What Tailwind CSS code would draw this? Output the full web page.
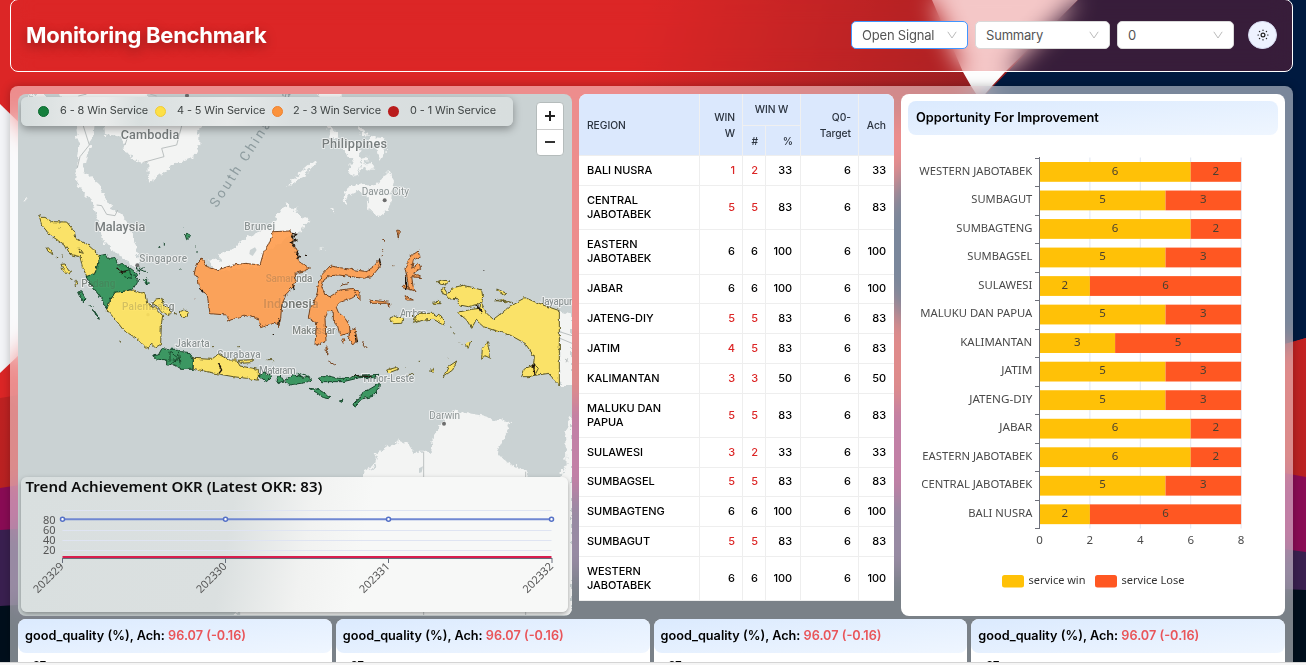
<!DOCTYPE html>
<html lang="en">
<head>
<meta charset="utf-8">
<title>Monitoring Benchmark</title>
<script src="https://cdn.jsdelivr.net/npm/@tailwindcss/browser@4"></script>
</head>
<body class="relative flex h-[665px] w-[1306px] flex-col overflow-hidden bg-[#f0f0f0] font-['Inter',sans-serif] text-black">
<svg class="absolute inset-0" width="1306" height="662" viewBox="0 0 1306 662">
  <defs>
    <linearGradient id="red" gradientUnits="userSpaceOnUse" x1="650" y1="0" x2="980" y2="90"><stop offset="0" stop-color="#dc2626"/><stop offset="1" stop-color="#9a1f22"/></linearGradient>
    <linearGradient id="red2" x1="0" y1="0" x2="0" y2="1"><stop offset="0" stop-color="#c42222"/><stop offset="1" stop-color="#b92222"/></linearGradient>
  </defs>
  <rect width="1306" height="665" fill="#dc2626"/>
  <polygon points="0,0 1306,0 1306,120 0,120" fill="url(#red)"/>
  <polygon points="932,0 1078,0 1005,72 992,86 980,100 971,86 963,72" fill="#fdfdfd"/>
  <polygon points="1078,0 1306,0 1306,338 1290,343 1190,370 897,318 850,250 897,183 980,100" fill="#001a40"/>
  <polygon points="0,104 140,240 0,373" fill="#f4f5f8"/>
  <polygon points="0,398 300,350 897,318 1190,370 1306,338 1306,500 0,500" fill="url(#red2)"/>
  <polygon points="0,488 573,402 897,402 1306,477 1306,560 0,560" fill="#8a0c55"/>
  <polygon points="0,530 573,495 897,497 1306,552 1306,620 0,620" fill="#3a2050"/>
  <polygon points="0,606 573,573 897,573 1306,590 1306,665 0,665" fill="#000f1c"/>
</svg>

<header class="relative mx-[10px] -mt-px flex h-[73px] w-[1283px] shrink-0 items-center justify-between rounded-lg border border-white bg-[#dc2626]/25 px-[15px] pb-px backdrop-blur-md">
  <h1 class="text-[22px] leading-none font-bold tracking-[-0.26px] whitespace-nowrap text-white [text-shadow:0_4px_12px_rgba(0,0,0,.35)]">Monitoring Benchmark</h1>
  <div class="flex items-center text-[13px] tracking-[-0.2px] text-[#555]">
    <div class="flex h-7 w-[117px] items-center justify-between rounded-[5px] border border-[#4096ff] bg-white px-[10px]"><span class="pt-px">Open Signal</span><svg width="10" height="8" viewBox="0 0 10 8" fill="none" stroke="#bbb"><path d="M.8.8 5 7 9.200.8"/></svg></div>
    <div class="ml-[7px] flex h-7 w-[135px] items-center justify-between rounded-[5px] border border-[#d9d9d9] bg-white px-[10px]"><span class="pt-px">Summary</span><svg width="10" height="8" viewBox="0 0 10 8" fill="none" stroke="#bbb"><path d="M.8.8 5 7 9.200.8"/></svg></div>
    <div class="ml-[7px] flex h-7 w-[117px] items-center justify-between rounded-[5px] border border-[#d9d9d9] bg-white px-[10px]"><span class="pt-px">0</span><svg width="10" height="8" viewBox="0 0 10 8" fill="none" stroke="#bbb"><path d="M.8.8 5 7 9.200.8"/></svg></div>
    <div class="ml-[14px] flex h-7 w-[29px] items-center justify-center rounded-full border border-[#d5d9ef] bg-[#eef2ff]"><svg width="12" height="12" viewBox="0 0 12 12" fill="none" stroke="#222" stroke-width="1.200" stroke-linecap="round"><circle cx="6" cy="6" r="1.900"/><path d="M6 1v.4M6 10.600v.4M1 6h.4M10.600 6h.4M2.400 2.400l.3.3M9.300 9.300l.3.3M2.400 9.600l.3-.3M9.300 2.700l.3-.3"/></svg></div>
  </div>
</header>

<main class="relative mx-[10px] mt-[14px] flex h-[576px] w-[1283px] shrink-0 flex-col gap-1 overflow-hidden rounded-t-lg bg-white/48 px-2 pt-2 shadow-[0_0_10px_rgba(0,0,0,.25)] backdrop-blur-md">
  <div class="flex h-[521px] shrink-0">
    <section class="relative h-[522px] w-[554px] overflow-hidden rounded-lg bg-[#cad2d3]">
      <svg class="block" width="554" height="521" viewBox="54 27 1662 1563">
        <defs>
          <filter id="rough" x="-5%" y="-5%" width="110%" height="110%"><feTurbulence type="fractalNoise" baseFrequency=".08" numOctaves="2" seed="4"/><feDisplacementMap in="SourceGraphic" scale="11" xChannelSelector="R" yChannelSelector="G"/></filter>
          <filter id="coast" x="-5%" y="-5%" width="110%" height="110%"><feTurbulence type="fractalNoise" baseFrequency=".06" numOctaves="3" seed="9"/><feDisplacementMap in="SourceGraphic" scale="26" xChannelSelector="R" yChannelSelector="G"/></filter>
        </defs>
        <g fill="#f3f4f3" filter="url(#coast)">
          <path d="M85 27H135V36H85ZM160 20H430L470 60H598V180L580 215 510 245 480 270 447 293 445 235 420 232 400 222 375 195 365 158 315 150 312 110 285 110 280 150 265 200 250 262 272 275 300 300 320 355 350 378 375 400 395 440 410 490 416 520 420 545 400 540 345 505 305 460 298 410 275 350 245 315 225 290 233 230 238 180 228 123 190 40Z"/>
          <path d="M622 520 660 527 665 503 700 490 730 465 770 445 820 410 842 375 865 355 880 375 895 365 890 385 935 405 912 420 910 435 875 450 800 500 780 545 650 560Z"/>
          <path d="M958 27H1025V60H958ZM980 115 1010 140 1015 155 1000 160 985 140ZM1030 185 1065 165 1085 200 1065 222 1045 222ZM1070 215 1084 222 1068 275 1045 265 1052 235ZM1110 155 1150 160 1158 195 1138 228 1128 185 1095 175ZM1090 240 1112 230 1120 250 1098 258ZM1090 218 1102 215 1087 252 1076 264ZM870 290 945 222 952 230 920 264 885 290 865 304ZM1028 350 1042 310 1085 295 1105 305 1130 300 1150 270 1165 258 1182 290 1175 320 1174 355 1152 392 1128 388 1102 370 1100 330 1070 318 1045 330 1036 355ZM1070 118 1090 132 1102 152 1086 150ZM995 380l12-4v6zM960 492l10-4v7z"/>
          <path d="M1678 677 1716 690V900H1678Z"/>
          <path d="M700 1600 740 1560 1055 1180 1085 1185 1092 1158 1122 1145 1135 1105 1198 1066 1222 1078 1240 1100 1290 1100 1300 1060 1330 1005 1365 980 1405 985 1440 990 1490 1005 1530 1008 1520 1045 1490 1100 1510 1125 1570 1155 1612 1200 1665 1195 1700 1140 1695 1050 1716 985V1600Z"/>
          <path d="M70 340h6v9h-6z"/>
        </g>
        <g fill="#cad2d3"><path d="M1522 1065l10-4 4 12-12 2zM1257 1150l12-6-4 18-8 2zM750 495l15-8 5 8-12 18-10-6z"/></g>
        <g fill="none" stroke="#b0b6b6" stroke-width="2.500">
          <path d="M250 123 268 180 240 215 232 248M290 360 305 362 320 388 345 392 353 375M375 180 385 150M545 123 530 180 485 190 492 215 430 232M1271 1100V1600M1577 1160V1600M1678 740 1716 752M1680 760 1716 775M235 33 260 27M450 27 470 33M780 440l10-10"/>
          <path d="M1695 822l10 8M1703 820l-5 12"/>
        </g>
        <g font-family="Roboto,sans-serif" fill="#8b9393" stroke="#f3f4f4" stroke-width="5" stroke-linejoin="round" paint-order="stroke">
          <g font-size="38" font-weight="500"><text x="362" y="163" textLength="176" fill="#777d7d">Cambodia</text><text x="284" y="438" textLength="152" fill="#777d7d">Malaysia</text><text x="965" y="188" textLength="196" fill="#777d7d">Philippines</text><text x="790" y="669" textLength="166" fill="#777d7d">Indonesia</text></g>
          <g font-size="30" font-weight="500"><text x="733" y="434" textLength="92">Brunei</text><text x="418" y="531" textLength="143">Singapore</text><text x="1085" y="330" textLength="142" font-weight="400">Davao City</text><text x="244" y="605" textLength="102">Padang</text><text x="366" y="674" textLength="157">Palembang</text><text x="797" y="592" textLength="140">Samarinda</text><text x="877" y="747" textLength="130">Makassar</text><text x="526" y="787" textLength="103">Jakarta</text><text x="652" y="818" textLength="130">Surabaya</text><text x="777" y="866" textLength="110">Mataram</text><text x="1085" y="892" textLength="157">Timor-Leste</text><text x="1200" y="697" textLength="80">Ambon</text><text x="1617" y="659" textLength="115">Jayapura</text><text x="1288" y="1002" textLength="92" font-weight="400">Darwin</text></g>
          <text transform="translate(650 370) rotate(-57)" font-size="41" textLength="410" stroke="none" fill="#8e9c9f">South China Sea</text>
        </g>
        <g fill="#6d6d6d"><circle cx="1154" cy="346" r="6"/><circle cx="412" cy="541" r="6"/><circle cx="1332" cy="1016" r="6"/><circle cx="561" cy="32" r="6"/><circle cx="444" cy="689" r="5"/></g>
        <g filter="url(#rough)" stroke-width="3" stroke-linejoin="round" fill-opacity=".9">
          <g fill="#ffe35c" stroke="#5f5925">
            <path d="M118 397 135 397 155 410 200 411 222 438 228 460 262 478 298 510 290 560 262 578 247 545 240 515 210 508 195 480 150 450 125 420ZM232 490 240 490 250 505 240 502Z"/>
            <path d="M135 490 145 488 160 507 148 502ZM183 538 195 537 212 560 205 570 190 555ZM170 516l5 3M186 511l4 5M225 587 235 592 226 605ZM115 392l8-3M210 577l8 5M355 768l7 4M176 430l3 2"/>
            <path d="M345 620 400 615 435 627 440 655 470 672 488 692 484 718 482 778 465 788 456 778 440 790 412 762 370 735 345 702 320 674 328 652Z"/>
            <path d="M458 655 470 642 485 640 490 658 512 680 508 692 488 682 475 668ZM540 680 552 675 565 682 560 695 543 695ZM522 686h8"/>
            <path d="M580 820 635 823 655 807 678 820 685 825 710 825 720 843 775 853 775 886 740 880 700 875 655 867 620 860 580 850ZM715 826 762 824 752 833 722 835ZM800 824h14M820 830h4M636 785h4M712 785h5"/>
            <path d="M1168 700 1185 692 1210 700 1205 715 1180 716ZM1245 700 1258 685 1300 685 1330 700 1333 720 1300 703 1270 705 1240 715ZM1236 690l18 20M1160 855 1190 847 1197 852 1165 864ZM1215 846h5M1256 829h5M1225 868h15M1289 857 1300 850 1300 862Z"/>
            <path d="M1340 630 1355 610 1390 600 1445 615 1448 635 1445 655 1460 685 1480 703 1510 680 1530 663 1575 638 1620 657 1678 677V900L1645 865 1610 870 1598 872 1603 815 1575 775 1530 750 1480 735 1450 725 1428 705 1415 730 1400 705 1373 682 1415 673 1440 670 1442 655 1405 665 1380 660 1370 640 1350 642Z"/>
            <path d="M1565 875 1575 850 1605 840 1615 850 1605 870 1590 875ZM1445 820 1447 790 1462 770 1467 795 1472 820 1455 812ZM1396 775l8 15 8-22M1330 875 1345 845 1370 828 1358 855ZM1312 590 1325 585 1350 588 1335 600 1320 597ZM1322 615 1332 610 1342 625 1332 632ZM1298 652 1320 648 1320 656 1302 656ZM1490 612 1520 625 1510 630 1496 620ZM1485 647 1535 652 1510 644ZM1350 725l5 4M1375 770l12 8M1345 818l3 3M1360 742l4 6"/>
          </g>
          <g fill="#2f9155" stroke="#15442a">
            <path d="M298 512 318 508 325 520 345 518 355 540 385 548 408 566 412 590 400 610 378 618 345 622 325 655 320 672 300 635 268 592 258 575 285 565Z"/>
            <path d="M236 622 245 620 258 642 250 650ZM267 658 277 668M280 673 298 700 290 695ZM355 535 385 545 395 580 370 575M365 560l25-6M405 550 440 560M410 560 435 545M430 583 440 600 448 592M440 580v20M418 548v20M400 570l20 18M555 448 563 445 570 455 560 464ZM475 487h6M493 474v8M553 426v3M583 486h4M588 500l5 3M537 555h5"/>
            <path d="M458 812 475 810 485 792 530 793 545 800 570 803 580 825 578 853 545 853 525 840 500 840 500 825 470 822ZM510 800 535 820 510 840M535 800 540 835M515 825h20M510 800v30"/>
            <path d="M775 872 795 864 815 873 800 890ZM828 885 840 870 852 888 835 896ZM855 885 870 875 895 870 905 865 935 882 920 892 870 900 855 892ZM955 880 980 872 1015 880 1050 880 1060 872 1140 868 1120 878 1080 878 1030 890 965 890ZM870 868 905 875M890 865l20 12 20-4M927 910 955 913 990 935 985 941 970 938 950 923ZM1058 960 1075 945 1090 920 1110 912 1138 895 1136 912 1115 935 1085 942 1065 963ZM1018 948 1030 945 1025 952Z"/>
          </g>
          <g fill="#ff9c4d" stroke="#774621">
            <path d="M583 565 590 535 605 520 622 545 650 555 700 540 735 535 780 540 790 505 805 480 820 440 870 438 880 455 878 480 890 492 895 525 928 550 912 558 885 565 888 590 880 605 858 628 845 662 842 700 836 728 825 712 782 728 778 702 730 690 688 708 680 690 630 686 622 632 598 606 594 580Z"/>
            <path d="M950 630 955 600 965 570 990 543 1020 548 1100 560 1120 545 1138 525 1142 542 1115 575 1090 580 1020 570 990 572 972 585 965 605 975 630 990 635 1020 615 1060 610 1078 625 1055 640 1020 652 1008 665 1015 682 1035 700 1048 720 1050 742 1020 752 1012 720 1000 705 1000 682 985 678 975 700 978 770 945 780 950 712 925 700 930 670 940 655Z"/>
            <path d="M1045 760 1050 740 1065 730 1072 765 1058 780ZM1025 765 1035 765 1030 775ZM1110 645 1168 652 1170 668 1160 655 1112 655ZM978 785 983 790 980 812ZM1062 615 1080 620 1080 645 1070 635ZM1085 768 1102 790M985 828 1005 840M1020 603 1045 595"/>
            <path d="M1225 610 1222 580 1215 550 1230 515 1255 498 1260 515 1240 525 1235 550 1255 535 1262 550 1240 565 1265 578 1235 575 1240 610 1248 620ZM1207 600 1225 605 1235 615 1208 608ZM1215 632 1240 645 1220 645ZM1190 436 1198 435 1195 460ZM1147 460 1157 470M1148 490v10M1147 510v6M1180 542h3M582 640l6 4"/>
          </g>
          <path fill="none" stroke="#22190f" stroke-width="4" d="M876 445 890 448 878 455 888 465 874 472 885 485M888 500l10 15-8 6M878 595l5 20M598 610l15 12M836 700l-3 25M1138 520l4 20M350 548l15 15 18-5M655 835l10 20-8 10M1065 750l5 25M1600 840l5 30M915 511h3M1450 555h3M1217 570v45M1055 872l60 3M820 750v3M1430 655l15 30"/>
        </g>
        <g font-family="Roboto,sans-serif" font-size="30" font-weight="500" fill="#6f6f60" opacity=".25"><text x="244" y="605" textLength="102">Padang</text><text x="366" y="674" textLength="157">Palembang</text><text x="797" y="592" textLength="140">Samarinda</text><text x="877" y="747" textLength="130">Makassar</text><text x="790" y="669" textLength="166" font-size="38">Indonesia</text></g>
      </svg>
      <div class="absolute top-[3px] left-[3px] flex h-[29px] w-[492px] items-center rounded-md bg-[linear-gradient(90deg,#d6dddd_0%,#e6e9e9_12%,#e9ebeb_17%,#d9dfdf_24%,#e6e9e9_42%,#dadfe0_55%,#d8dede_100%)] text-[10.900px] tracking-[-0.08px] text-[#3f4444] shadow-[0_3px_8px_rgba(0,0,0,.35)]">
        <span class="ml-[17px] size-[11px] shrink-0 rounded-full border border-[#0b6a30] bg-[#15803d]"></span><span class="ml-[11px] w-[88px] pb-[2px] whitespace-nowrap">6 - 8 Win Service</span>
        <span class="ml-[7px] size-[11px] shrink-0 rounded-full border border-[#f1cb35] bg-[#fde047]"></span><span class="ml-[11px] w-[88px] pb-[2px] whitespace-nowrap">4 - 5 Win Service</span>
        <span class="ml-[7px] size-[11px] shrink-0 rounded-full border border-[#ef8230] bg-[#fb923c]"></span><span class="ml-[10px] w-[88px] pb-[2px] whitespace-nowrap">2 - 3 Win Service</span>
        <span class="ml-[7px] size-[11px] shrink-0 rounded-full bg-[#b91c1c]"></span><span class="ml-[11px] pb-[2px] whitespace-nowrap">0 - 1 Win Service</span>
      </div>
      <div class="absolute top-[8px] left-[518px] flex h-[54px] w-7 flex-col rounded-[4px] border border-[#b5bcbc] bg-white">
        <div class="flex h-[27px] items-center justify-center border-b border-[#ccc]"><svg width="10" height="10" viewBox="0 0 10 10" stroke="#222" stroke-width="2"><path d="M5 0v10M0 5h10"/></svg></div>
        <div class="flex h-[26px] items-center justify-center"><svg width="10" height="10" viewBox="0 0 10 10" stroke="#333" stroke-width="2"><path d="M0 5h10"/></svg></div>
      </div>
      <div class="absolute top-[383px] left-[3px] h-[135px] w-[547px] rounded-md bg-[linear-gradient(100deg,#d9dfdf_0%,#dbe0e0_38%,#f1f2f1_52%,#f7f8f7_62%,#f7f8f7_100%)] shadow-[0_2px_5px_rgba(0,0,0,.35)]">
        <svg class="block" width="547" height="135" viewBox="21 477 547 135" font-family="'Noto Sans',sans-serif">
          <text x="25.500" y="492" font-size="14" font-weight="600" textLength="297" lengthAdjust="spacingAndGlyphs" fill="#0c0c0c">Trend Achievement OKR (Latest OKR: 83)</text>
          <path d="M62.500 510.500H551.500M62.500 530.500H551.500M62.500 540.500H551.500M62.500 550.500H551.500" stroke="#dfe4f2"/>
          <g font-size="11" fill="#555" text-anchor="end"><text x="55.500" y="524">80</text><text x="55.500" y="534">60</text><text x="55.500" y="544">40</text><text x="55.500" y="554">20</text></g>
          <path d="M62.500 558.500H552M62.500 558v5M225.500 558v5M388.500 558v5M552 558v5" stroke="#666d7a" fill="none"/>
          <path d="M62.500 557H551.500" stroke="#d81e4e" stroke-width="2"/>
          <path d="M62.500 519.200H551.500" stroke="#6f87d2" stroke-width="2"/>
          <g fill="#fff" stroke="#5470c6" stroke-width="1.500"><circle cx="62.500" cy="519.200" r="2"/><circle cx="225.500" cy="519.200" r="2"/><circle cx="388.500" cy="519.200" r="2"/><circle cx="551.500" cy="519.200" r="2"/></g>
          <g font-size="11" fill="#555" text-anchor="end"><text transform="translate(64.500 567) rotate(-45)">202329</text><text transform="translate(227.500 567) rotate(-45)">202330</text><text transform="translate(390.500 567) rotate(-45)">202331</text><text transform="translate(554 567) rotate(-45)">202332</text></g>
        </svg>
      </div>
    </section>

    <section class="ml-[7px] h-[507px] w-[315px] overflow-hidden rounded-t-lg bg-white text-[11px] leading-[14px] font-[450] tracking-[-0.05px]">
      <div class="grid h-[62px] grid-cols-[121px_43px_23px_35px_58px_35px] grid-rows-[32px_30px] border-b border-[#eee] bg-[#dbe8fd] text-[10.300px] leading-4 font-medium text-[#2c3440] [&>div]:border-[#f0f0f0]">
        <div class="row-span-2 flex items-center border-r pb-px pl-2">REGION</div>
        <div class="row-span-2 flex items-center justify-end border-r pr-[7px] pb-px text-right">WIN<br>W</div>
        <div class="col-span-2 flex items-center justify-center border-r border-b pb-px">WIN W</div>
        <div class="col-start-5 row-span-2 row-start-1 flex items-center justify-end border-r pr-[7px] pb-px text-right">Q0-<br>Target</div>
        <div class="col-start-6 row-span-2 row-start-1 flex items-center justify-end pr-2 pb-px">Ach</div>
        <div class="col-start-3 row-start-2 flex items-center justify-end border-r pr-[7px]">#</div>
        <div class="col-start-4 row-start-2 flex items-center justify-end border-r pr-[7px]">%</div>
      </div>
      <div id="rows" class="[&>div>div]:pb-[2px]"></div>
    </section>

    <section class="ml-[7px] h-[522px] w-[384px] rounded-lg bg-white px-[7px] pt-[7px]">
      <div class="flex h-[34px] items-center rounded-lg bg-linear-to-br from-[#dbeafe] to-[#eff6ff] pl-2 text-[12.800px] font-semibold">Opportunity For Improvement</div>
      <svg id="bars" class="block" width="370" height="470" viewBox="908 135 370 470" font-family="'Noto Sans',sans-serif" font-size="11.500"></svg>
    </section>
  </div>

  <div class="flex shrink-0 gap-1 text-[12.700px] font-semibold" id="cards"></div>
</main>
<div class="relative h-[3px] w-full border-t border-[#d4d4d4] bg-[#f5f5f5]"></div>

<script>
const rows = [["BALI NUSRA",1,2,33,30],["CENTRAL<br>JABOTABEK",5,5,83,44],["EASTERN<br>JABOTABEK",6,6,100,45],["JABAR",6,6,100,29],["JATENG-DIY",5,5,83,30],["JATIM",4,5,83,30],["KALIMANTAN",3,3,50,30],["MALUKU DAN<br>PAPUA",5,5,83,44],["SULAWESI",3,2,33,30],["SUMBAGSEL",5,5,83,29],["SUMBAGTENG",6,6,100,30],["SUMBAGUT",5,5,83,30],["WESTERN<br>JABOTABEK",6,6,100,44]];
const tone = v => v < 6 ? "text-[#dc2626]" : "text-black";
document.getElementById("rows").innerHTML = rows.map(([n,a,b,p,h]) =>
  `<div class="grid grid-cols-[121px_43px_23px_35px_58px_35px] border-b border-[#eee] [&>div]:border-[#eee]" style="height:${h}px">
    <div class="flex items-center border-r pl-2">${n}</div>
    <div class="flex items-center justify-end border-r pr-[7px] ${tone(a)}">${a}</div>
    <div class="flex items-center justify-end border-r pr-[7px] ${tone(b)}">${b}</div>
    <div class="flex items-center justify-end border-r pr-2">${p}</div>
    <div class="flex items-center justify-end border-r pr-[7px]">6</div>
    <div class="flex items-center justify-end pr-2">${p}</div></div>`).join("");

const cats = [["WESTERN JABOTABEK",6,113],["SUMBAGUT",5,61],["SUMBAGTENG",6,76],["SUMBAGSEL",5,65],["SULAWESI",2,54],["MALUKU DAN PAPUA",5,112],["KALIMANTAN",3,72],["JATIM",5,31],["JATENG-DIY",5,63],["JABAR",6,33],["EASTERN JABOTABEK",6,110],["CENTRAL JABOTABEK",5,111],["BALI NUSRA",2,64]];
const x0 = 1039.5, u = 25.2, y0 = 157.5, s = 28.53;
let out = "";
for (let v = 2; v <= 8; v += 2) out += `<path d="M${x0+v*u} ${y0}V528.500" stroke="#e0e6f1"/>`;
cats.forEach(([n,w,len], i) => {
  const y = y0 + i*s + 4.5, m = x0 + w*u;
  out += `<path d="M1035 ${Math.round(y0+i*s)+.5}h5" stroke="#6e7079"/>
  <rect x="${x0}" y="${y}" width="${w*u}" height="19.800" fill="#ffc107"/><rect x="${m}" y="${y}" width="${(8-w)*u}" height="19.800" fill="#ff5722"/>
  <text x="${1032.3-len}" y="${y+12.6}" textLength="${len}" lengthAdjust="spacingAndGlyphs" fill="#4a4a4a">${n}</text>
  <g fill="#4a4030" text-anchor="middle"><text x="${x0+w*u/2}" y="${y+12.6}">${w}</text><text x="${(m+x0+8*u)/2}" y="${y+12.6}">${8-w}</text></g>`;
});
out += `<path d="M1039.500 157V528.500M1035 528.500h5" stroke="#6e7079" fill="none"/>`;
for (let v = 0; v <= 8; v += 2) out += `<text x="${x0+v*u}" y="543.500" text-anchor="middle" fill="#4a4a4a">${v}</text>`;
out += `<rect x="1002" y="575" width="22" height="12.500" rx="2.500" fill="#ffc107"/><rect x="1095" y="575" width="22" height="12.500" rx="2.500" fill="#ff5722"/>
<g fill="#333"><text x="1028.500" y="584" textLength="57" lengthAdjust="spacingAndGlyphs">service win</text><text x="1121.500" y="584" textLength="63" lengthAdjust="spacingAndGlyphs">service Lose</text></g>`;
document.getElementById("bars").innerHTML = out;

document.getElementById("cards").innerHTML = Array(4).fill(
  `<div class="h-24 flex-1 rounded-lg bg-white"><div class="flex h-[34px] items-center rounded-lg bg-linear-to-br from-[#dbeafe] to-[#eff6ff] pl-[7px] whitespace-pre"><span>good_quality (%), Ach: </span><span class="text-[#e9555a]">96.07 (-0.16)</span></div><div class="pt-1 pl-[15px] text-[11px] leading-4">97</div></div>`).join("");
</script>
</body>
</html>
